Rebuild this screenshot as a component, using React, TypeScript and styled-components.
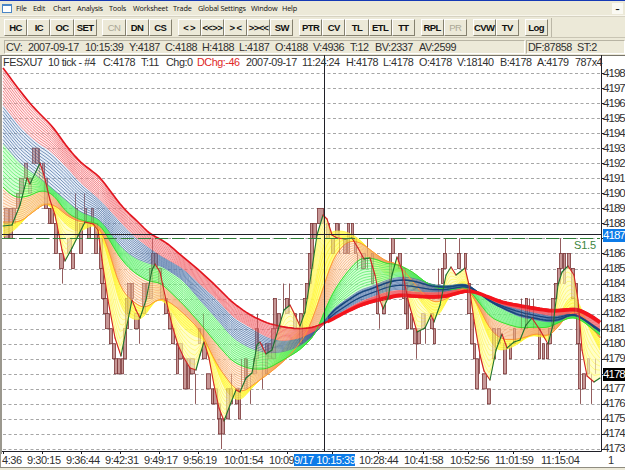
import React from 'react';
import styled, { createGlobalStyle } from 'styled-components';

type Point = [number, number];

const menuItems: [string, number][] = [
  ['File', 17],
  ['Edit', 20],
  ['Chart', 24],
  ['Analysis', 32],
  ['Tools', 24],
  ['Worksheet', 40],
  ['Trade', 25],
  ['Global Settings', 53],
  ['Window', 31],
  ['Help', 20],
];

const buttonGroups = [
  ['HC', 'IC', 'OC', 'SET'],
  ['CN', 'DN', 'CS'],
  ['< >', '<<>>', '> <', '>><<', 'SW'],
  ['PTR', 'CV', 'TL', 'ETL', 'TT'],
  ['RPL', 'PR'],
  ['CVW', 'TV'],
  ['Log'],
];

const disabledButtons = ['CN', 'PR'];

const cursorValues: [string, number][] = [
  ['CV:', 22],
  ['2007-09-17', 57],
  ['10:15:39', 44],
  ['Y:4187', 36],
  ['C:4188', 37],
  ['H:4188', 37],
  ['L:4187', 36],
  ['O:4188', 38],
  ['V:4936', 37],
  ['T:12', 25],
  ['BV:2337', 44],
  ['AV:2599', 45],
];

const quoteValues: [string, number][] = [
  ['FESXU7', 45],
  ['10 tick - #4', 55],
  ['C:4178', 38],
  ['T:11', 25],
  ['Chg:0', 31],
  ['DChg:-46', 49],
  ['2007-09-17', 56],
  ['11:24:24', 44],
  ['H:4178', 37],
  ['L:4178', 36],
  ['O:4178', 38],
  ['V:18140', 43],
  ['B:4178', 37],
  ['A:4179', 38],
  ['787x4', 26],
];

const timeLabels: [string, number][] = [
  ['4:36', 25],
  ['9:30:15', 39],
  ['9:36:44', 39],
  ['9:42:31', 39],
  ['9:49:17', 39],
  ['9:56:19', 41],
  ['10:01:54', 45],
  ['10:09', 90],
  ['10:28:44', 45],
  ['10:41:58', 46],
  ['10:52:56', 45],
  ['11:01:59', 46],
  ['11:15:04', 67],
  ['1', 10],
];

const timeTicks = [3, 42, 81, 120, 159, 198, 241, 287, 332, 378, 423, 468, 513, 559];

const prices = Array.from({ length: 26 }, (_, i) => 4198 - i);
const priceY = (price: number) => 73 + (98 - price) * 15.04;

// Curves run from the fastest average to the slowest one.
const fast: Point[] = [
  [3, 226], [12, 225], [20, 205], [27, 178], [30, 184], [40, 163], [44, 175], [50, 200], [55, 215],
  [62, 250], [65, 261], [72, 248], [78, 236], [85, 222], [93, 224], [98, 230], [102, 260], [108, 300],
  [115, 338], [121, 356], [127, 325], [132, 300], [136, 310], [140, 318], [146, 300], [152, 270],
  [155, 264], [160, 272], [166, 300], [172, 325], [178, 345], [184, 358], [190, 368], [196, 370],
  [200, 355], [204, 342], [209, 358], [214, 385], [219, 408], [224, 421], [230, 405], [236, 390],
  [240, 392], [246, 378], [252, 373], [257, 345], [260, 342], [266, 354], [272, 350], [278, 330],
  [284, 310], [290, 305], [295, 315], [300, 326], [305, 312], [311, 275], [317, 235], [323, 215],
  [327, 219], [332, 235], [337, 238], [345, 239], [352, 238], [358, 248], [364, 259], [370, 258],
  [375, 275], [380, 300], [383, 309], [388, 298], [392, 275], [397, 257], [402, 270], [408, 300],
  [413, 318], [417, 332], [425, 328], [431, 315], [434, 322], [440, 305], [446, 275], [451, 267],
  [456, 275], [460, 272], [465, 268], [469, 285], [474, 320], [480, 355], [484, 371], [490, 380],
  [496, 350], [502, 334], [507, 348], [514, 342], [520, 340], [526, 325], [532, 318], [540, 330],
  [548, 344], [553, 325], [558, 285], [562, 272], [568, 266], [574, 275], [578, 300], [582, 350],
  [587, 376], [594, 382], [600, 378],
];

const yellowMid: Point[] = [
  [3, 237], [15, 230], [33, 210], [45, 201], [55, 212], [66, 225], [78, 233], [90, 226], [98, 225],
  [108, 258], [121, 310], [130, 318], [140, 321], [148, 312], [156, 298], [166, 302], [180, 325],
  [195, 337], [204, 338], [214, 360], [224, 390], [233, 398], [240, 402], [250, 390], [262, 378],
  [272, 365], [283, 350], [293, 335], [302, 330], [312, 300], [322, 245], [330, 231], [345, 231],
  [357, 237], [370, 250], [383, 275], [392, 275], [402, 268], [413, 290], [425, 308], [437, 320],
  [447, 300], [457, 285], [465, 276], [475, 300], [485, 330], [495, 350], [505, 350], [515, 346],
  [530, 335], [548, 338], [557, 322], [568, 296], [577, 296], [587, 325], [600, 350],
];

const yellowOrange: Point[] = [
  [3, 222], [20, 222], [33, 212], [45, 203], [55, 205], [67, 216], [80, 222], [95, 222], [105, 238],
  [120, 288], [133, 302], [145, 309], [152, 303], [160, 298], [170, 302], [183, 313], [200, 330],
  [217, 365], [233, 387], [242, 393], [250, 387], [267, 375], [283, 362], [297, 347], [308, 331],
  [322, 292], [333, 258], [347, 241], [360, 242], [373, 252], [387, 262], [397, 263], [410, 278],
  [420, 291], [433, 303], [447, 299], [457, 292], [466, 286], [478, 305], [490, 330], [503, 340],
  [520, 339], [537, 333], [547, 337], [556, 330], [567, 315], [578, 310], [588, 322], [600, 338],
];

const orangeGreen: Point[] = [
  [3, 187], [15, 198], [30, 196], [40, 190], [52, 193], [67, 213], [80, 220], [100, 224], [120, 258],
  [133, 272], [150, 282], [160, 282], [183, 304], [200, 323], [217, 344], [233, 362], [250, 369],
  [267, 369], [283, 360], [300, 350], [315, 335], [325, 310], [333, 292], [347, 272], [360, 258],
  [373, 258], [387, 264], [397, 264], [413, 272], [425, 282], [433, 287], [447, 290], [457, 289],
  [466, 286], [478, 301], [490, 317], [503, 323], [520, 328], [537, 327], [547, 328], [560, 322],
  [570, 317], [580, 319], [600, 335],
];

const greenBlue: Point[] = [
  [3, 143], [20, 163], [40, 178], [60, 195], [80, 212], [100, 219], [120, 246], [133, 257],
  [150, 264], [160, 265], [183, 280], [200, 300], [217, 319], [233, 338], [250, 348], [267, 353],
  [283, 352], [300, 346], [315, 334], [333, 309], [347, 299], [360, 290], [373, 286], [387, 280],
  [400, 277], [413, 278], [433, 285], [447, 286], [460, 284], [468, 284], [480, 294], [490, 302],
  [503, 309], [520, 317], [537, 320], [547, 322], [560, 321], [572, 314], [580, 317], [600, 332],
];

const blueRed: Point[] = [
  [3, 104], [20, 126], [37, 142], [50, 150], [67, 167], [80, 182], [100, 199], [120, 221],
  [133, 235], [150, 248], [160, 255], [183, 268], [200, 284], [217, 299], [233, 317], [250, 327],
  [267, 337], [283, 341], [300, 338], [315, 331], [333, 318], [347, 309], [360, 302], [373, 297],
  [387, 292], [400, 290], [413, 292], [433, 293], [447, 292], [460, 289], [468, 288], [480, 293],
  [490, 300], [503, 305], [520, 309], [537, 313], [553, 316], [572, 313], [582, 317], [600, 329],
];

const slow: Point[] = [
  [3, 68], [20, 91], [33, 107], [53, 127], [67, 147], [80, 162], [100, 177], [113, 195], [125, 210],
  [135, 219], [150, 234], [160, 239], [167, 243], [183, 257], [200, 271], [217, 287], [233, 303],
  [250, 315], [267, 323], [283, 327], [300, 329], [315, 327], [333, 319], [347, 312], [360, 306],
  [373, 302], [387, 299], [400, 296], [413, 297], [433, 298], [447, 297], [460, 293], [470, 291],
  [487, 296], [503, 302], [520, 305], [537, 308], [553, 310], [567, 309], [577, 308], [590, 314],
  [600, 321],
];

// x, width, high, low (last two digits of the price)
const candles: [number, number, number, number][] = [
  [4, 4, 89, 88], [4, 4, 88, 87], [9, 3, 89, 87], [12, 3, 89, 88], [16, 3, 90, 89], [19, 4, 91, 90],
  [24, 3, 92, 91], [28, 3, 91, 90], [32, 3, 93, 92], [35, 3, 93, 92], [39, 1, 93, 91], [42, 2, 92, 91],
  [44, 3, 91, 89], [48, 3, 89, 88], [50, 3, 89, 88], [54, 3, 88, 86], [59, 4, 86, 85], [62, 1, 85, 84],
  [67, 4, 87, 86], [71, 3, 86, 85], [75, 1, 90, 89], [75, 2, 89, 87], [79, 3, 88, 86], [84, 1, 90, 89],
  [84, 2, 89, 88], [87, 3, 88, 87], [91, 2, 89, 88], [94, 3, 88, 86], [99, 3, 87, 85], [100, 3, 85, 84],
  [101, 4, 84, 83], [103, 4, 83, 82], [105, 4, 82, 81], [109, 3, 81, 80], [112, 3, 80, 79],
  [114, 3, 79, 78], [117, 3, 79, 78], [121, 2, 79, 78], [123, 3, 81, 79], [125, 3, 83, 81],
  [127, 3, 84, 82], [131, 2, 84, 83], [134, 4, 82, 81], [139, 1, 82, 80], [142, 3, 84, 82],
  [146, 3, 84, 83], [149, 3, 85, 83], [152, 1, 87, 85], [151, 3, 86, 85], [154, 3, 86, 85],
  [158, 3, 85, 84], [160, 3, 84, 83], [164, 3, 83, 82], [168, 3, 82, 81], [171, 3, 81, 80],
  [176, 2, 80, 78], [178, 4, 80, 79], [183, 3, 79, 77], [187, 2, 79, 77], [190, 4, 79, 78],
  [195, 1, 78, 76], [198, 2, 81, 80], [203, 1, 82, 80], [202, 4, 80, 79], [206, 4, 78, 77],
  [211, 2, 77, 76], [213, 4, 77, 76], [217, 3, 76, 75], [218, 3, 75, 74], [221, 3, 75, 74],
  [221, 1, 74, 73], [226, 3, 77, 75], [229, 3, 77, 76], [231, 1, 78, 77], [235, 3, 77, 76],
  [238, 2, 77, 75], [241, 1, 79, 77], [244, 2, 79, 77], [247, 1, 79, 77], [250, 1, 78, 76],
  [253, 3, 79, 78], [255, 3, 81, 79], [257, 1, 82, 80], [262, 1, 80, 77], [265, 2, 80, 78],
  [268, 3, 80, 79], [271, 4, 81, 79], [273, 3, 83, 81], [277, 3, 82, 81], [283, 1, 84, 82],
  [285, 3, 83, 82], [289, 1, 84, 82], [293, 3, 82, 81], [299, 3, 82, 80], [303, 2, 83, 82],
  [305, 3, 84, 83], [308, 3, 86, 84], [310, 3, 88, 85], [312, 4, 88, 87], [317, 6, 89, 88],
  [326, 3, 88, 87], [331, 3, 87, 86], [335, 3, 88, 87], [339, 1, 88, 86], [343, 3, 87, 86],
  [347, 2, 88, 86], [351, 2, 88, 87], [354, 2, 87, 86], [357, 1, 86, 85], [361, 4, 86, 85],
  [367, 1, 87, 85], [371, 2, 86, 84], [376, 2, 84, 82], [379, 1, 82, 81], [382, 3, 83, 82],
  [386, 3, 84, 83], [389, 2, 86, 84], [391, 3, 87, 86], [398, 3, 86, 85], [402, 3, 85, 83],
  [404, 3, 84, 82], [406, 2, 83, 81], [410, 2, 82, 81], [413, 3, 81, 80], [416, 1, 80, 79],
  [417, 3, 81, 80], [421, 3, 82, 81], [425, 1, 82, 80], [430, 3, 82, 81], [433, 2, 81, 80],
  [438, 1, 85, 83], [441, 2, 85, 84], [443, 3, 86, 85], [445, 1, 87, 86], [457, 3, 86, 85],
  [459, 1, 87, 86], [464, 2, 86, 85], [467, 3, 84, 82], [470, 3, 82, 80], [473, 2, 80, 79],
  [475, 3, 79, 77], [479, 1, 80, 78], [482, 4, 78, 77], [487, 3, 77, 76], [492, 3, 81, 79],
  [497, 3, 81, 80], [503, 3, 80, 78], [509, 2, 80, 79], [513, 2, 81, 80], [521, 1, 83, 81],
  [525, 2, 83, 81], [529, 1, 83, 82], [533, 1, 83, 81], [538, 2, 81, 79], [542, 2, 80, 79],
  [546, 2, 80, 79], [548, 3, 81, 80], [551, 3, 83, 81], [554, 3, 84, 83], [557, 3, 85, 84],
  [559, 3, 86, 85], [560, 1, 87, 86], [563, 2, 86, 84], [567, 3, 86, 85], [571, 3, 85, 83],
  [574, 3, 84, 82], [576, 3, 82, 80], [578, 2, 80, 77], [580, 1, 77, 76], [582, 3, 78, 77],
  [587, 2, 79, 78], [591, 1, 78, 76], [595, 1, 79, 78],
];

const valueAt = (curve: Point[], x: number) => {
  const next = curve.findIndex((point) => point[0] >= x);
  if (next <= 0) return next === 0 ? curve[0][1] : curve[curve.length - 1][1];
  const [x0, y0] = curve[next - 1];
  const [x1, y1] = curve[next];
  return y0 + ((y1 - y0) * (x - x0)) / (x1 - x0);
};

const smoothAt = (curve: Point[], x: number) => {
  const reach = curve === fast ? 1 : Math.min(5, x - 3, 600 - x);
  return (
    (valueAt(curve, x - reach) +
      valueAt(curve, x - reach / 2) +
      valueAt(curve, x) +
      valueAt(curve, x + reach / 2) +
      valueAt(curve, x + reach)) /
    5
  );
};

const blend = (from: Point[], to: Point[], t: number) => {
  const points: string[] = [];
  for (let x = 3; x <= 600; x += 3) {
    const y = smoothAt(from, x) * (1 - t) + smoothAt(to, x) * t;
    points.push(`${x},${y.toFixed(1)}`);
  }
  return points.join(' ');
};

const bands = [
  { from: fast, to: yellowMid, color: '#fff65c', tint: '#fffebe', opacity: 0.85, lines: 7 },
  { from: yellowMid, to: yellowOrange, color: '#fff22c', tint: '#fffc6a', opacity: 0.8, lines: 5 },
  { from: yellowOrange, to: orangeGreen, color: '#f2a062', tint: '#ffe2c4', opacity: 0.5, lines: 11 },
  { from: orangeGreen, to: greenBlue, color: '#44e858', tint: '#a8ffa8', opacity: 0.5, lines: 11 },
  { from: greenBlue, to: blueRed, color: '#365f98', tint: '#b7cdec', opacity: 0.3, lines: 11 },
  { from: blueRed, to: slow, color: '#ec5058', tint: '#ffc8c8', opacity: 0.3, lines: 11 },
];

const areaBetween = (from: Point[], to: Point[]) =>
  `${blend(from, from, 0)} ${blend(to, to, 0).split(' ').reverse().join(' ')}`;

const Ribbon = () => (
  <g fill="none">
    {bands.map(({ from, to, color, tint, opacity, lines }) => (
      <g key={color}>
        <polygon points={areaBetween(from, to)} fill={tint} fillOpacity={opacity} />
        {Array.from({ length: lines }, (_, i) => (
          <polyline key={i} points={blend(from, to, i / lines)} stroke={color} strokeWidth={0.65} />
        ))}
      </g>
    ))}
    <polyline points={blend(yellowOrange, yellowOrange, 0)} stroke="#ff9a30" strokeWidth={1} />
    <polyline points={blend(orangeGreen, orangeGreen, 0)} stroke="#3fdc2c" strokeWidth={1} />
    <polyline points={blend(slow, slow, 0)} stroke="#e2141e" strokeWidth={1.7} />
    <g clipPath="url(#settled)">
      <polyline points={blend(greenBlue, blueRed, 0.2)} stroke="#17457c" strokeWidth={1.6} />
      <polyline points={blend(greenBlue, blueRed, 0.6)} stroke="#17457c" strokeWidth={1.2} />
      <polyline points={blend(blueRed, slow, 0.8)} stroke="#f4141c" strokeWidth={3.6} />
    </g>
  </g>
);

const Candles = () => (
  <g fill="#bd8583" fillOpacity={0.8} stroke="#7a3436" strokeWidth={0.75}>
    {candles.map(([x, width, high, low]) =>
      width === 1 ? (
        <path key={`${x}-${high}`} d={`M${x + 0.5} ${priceY(high)}V${priceY(low)}`} />
      ) : (
        <rect
          key={`${x}-${high}`}
          x={x + 0.5}
          y={priceY(high)}
          width={width}
          height={(high - low) * 15.04}
        />
      ),
    )}
  </g>
);

const FastLine = () => (
  <g strokeWidth={1.1} strokeLinecap="round">
    {fast.slice(1).map(([x, y], i) => (
      <line
        key={x}
        x1={fast[i][0]}
        y1={fast[i][1]}
        x2={x}
        y2={y}
        stroke={y > fast[i][1] ? '#d02028' : '#1c7030'}
      />
    ))}
  </g>
);

const Chart = () => (
  <Plot viewBox="0 55 604 400">
    <clipPath id="settled">
      <rect x={328} y={55} width={273} height={396} />
    </clipPath>
    <g stroke="#a6a6a6" strokeDasharray="3 2.5">
      {prices.map((price) => {
        const y = Math.round(priceY(price - 4100)) + 0.5;
        return <line key={price} x1={3} x2={601} y1={y} y2={y} />;
      })}
    </g>
    <Candles />
    <Ribbon />
    <g opacity={0.25}>
      <Candles />
    </g>
    <FastLine />
    <line x1={2} x2={600} y1={238.5} y2={238.5} stroke="#2f8038" strokeDasharray="13 4" />
    <text x={574} y={249} fill="#3c8540" fontSize={11} textLength={22}>
      S1.5
    </text>
    <g stroke="#202028">
      <path d="M2 234.5H601M324.5 55V451M601.5 55V451.5M2 451.5H601.5" />
      {prices.map((price) => {
        const y = Math.round(priceY(price - 4100)) + 0.5;
        return <line key={price} x1={601} x2={604} y1={y} y2={y} />;
      })}
      {timeTicks.map((x) => (
        <line key={x} x1={x + 0.5} x2={x + 0.5} y1={451} y2={454} />
      ))}
    </g>
  </Plot>
);

const App = () => (
  <>
    <GlobalStyle />
    <Window>
      <MenuBar>
        <WindowIcon />
        {menuItems.map(([label, width]) => (
          <MenuItem key={label} $width={width}>
            {label}
          </MenuItem>
        ))}
        <Minimise>–</Minimise>
      </MenuBar>
      <Toolbar>
        {buttonGroups.map((group) => (
          <ButtonGroup key={group[0]}>
            {group.map((label) => (
              <ToolButton key={label} disabled={disabledButtons.includes(label)}>
                {label}
              </ToolButton>
            ))}
          </ButtonGroup>
        ))}
        <ToolbarEnd />
      </Toolbar>
      <InfoBar>
        <InfoPanel $width={521}>
          {cursorValues.map(([label, width]) => (
            <Value key={label} $width={width}>
              {label}
            </Value>
          ))}
        </InfoPanel>
        <InfoPanel $width={99}>
          <Value $width={49}>DF:87858</Value>
          <Value $width={30}>ST:2</Value>
        </InfoPanel>
      </InfoBar>
      <ChartArea>
        <Chart />
        <QuoteRow>
          {quoteValues.map(([label, width]) => (
            <Value key={label} $width={width} $alert={label.startsWith('DChg')}>
              {label}
            </Value>
          ))}
        </QuoteRow>
        <PriceAxis>
          {prices.map((price) => (
            <PriceLabel key={price}>{price}</PriceLabel>
          ))}
          <PriceMarker $top={173} $color="#0c7be8">
            4187
          </PriceMarker>
          <PriceMarker $top={312} $color="#000">
            4178
          </PriceMarker>
        </PriceAxis>
      </ChartArea>
      <TimeAxis>
        {timeLabels.map(([label, width]) => (
          <TimeLabel key={label} $width={width}>
            {label}
          </TimeLabel>
        ))}
        <TimeMarker>9/17 10:15:39</TimeMarker>
      </TimeAxis>
      <StatusStrip />
    </Window>
  </>
);

export default App;

const GlobalStyle = createGlobalStyle`
  * {
    box-sizing: border-box;
  }

  body {
    margin: 0;
    overflow: hidden;
    font-family: 'Liberation Sans', Arial, sans-serif;
  }
`;

const Window = styled.div`
  display: flex;
  flex-direction: column;
  width: 625px;
  height: 470px;
  overflow: hidden;
  background: #ece9d8;
  border-top: 1px solid #1539b5;
  white-space: nowrap;
`;

const MenuBar = styled.nav`
  display: flex;
  flex: none;
  align-items: center;
  height: 15px;
  padding: 0 2px;
  border-bottom: 1px solid #f8f6ec;
  color: #101010;
  font-family: 'Open Sans', sans-serif;
  font-size: 7.3px;
  font-weight: 500;
  letter-spacing: -0.2px;
`;

const WindowIcon = styled.span`
  width: 10px;
  height: 9px;
  margin-right: 4px;
  border: 1px solid #4a86c6;
  border-top-width: 2px;
  background: #fff;
`;

const MenuItem = styled.span<{ $width: number }>`
  flex: 0 0 ${({ $width }) => $width}px;
`;

const Minimise = styled.span`
  width: 11px;
  height: 11px;
  margin-left: auto;
  background: #faf9f3;
  font-size: 8px;
  font-weight: bold;
  line-height: 12px;
  text-align: center;
`;

const Toolbar = styled.div`
  display: flex;
  flex: none;
  align-items: center;
  gap: 5.6px;
  height: 22px;
  padding: 1px 0 1px 4px;
  border-top: 1px solid #d6d2c2;
  border-bottom: 1px solid #c9c5b4;
`;

const ButtonGroup = styled.div`
  display: flex;
`;

const ToolButton = styled.button`
  width: 23.2px;
  height: 17px;
  padding: 0;
  border: 1px solid;
  border-color: #fff #85816f #85816f #fff;
  background: #ece9d8;
  color: #111;
  font: bold 9.5px 'Liberation Sans', Arial, sans-serif;
  letter-spacing: -0.6px;
  line-height: 16px;
  text-align: center;

  &:disabled {
    color: #aaa796;
    font-weight: normal;
  }
`;

const ToolbarEnd = styled.span`
  height: 19px;
  margin-left: -2px;
  border-left: 1px solid #bbb7a7;
`;

const InfoBar = styled.div`
  display: flex;
  flex: none;
  gap: 1px;
  height: 17px;
  padding: 2px 0 1px 4px;
`;

const InfoPanel = styled.div<{ $width: number }>`
  display: flex;
  align-items: center;
  width: ${({ $width }) => $width}px;
  padding-left: 1px;
  border: 1px solid;
  border-color: #b7b3a3 #fff #fff #b7b3a3;
`;

const Value = styled.span<{ $width: number; $alert?: boolean }>`
  flex: 0 0 ${({ $width }) => $width}px;
  color: ${({ $alert }) => ($alert ? '#e02828' : '#303030')};
  font-size: 10.8px;
  letter-spacing: -0.45px;
`;

const ChartArea = styled.main`
  position: relative;
  display: flex;
  flex: none;
  height: 399px;
  background: #fff;
  border-top: 1px solid #77746a;
  border-left: 2px solid #9b988e;
`;

const Plot = styled.svg`
  flex: none;
  width: 604px;
  height: 400px;
  margin: -1px 0 0 -2px;
  font-family: 'Liberation Sans', Arial, sans-serif;
`;

const QuoteRow = styled.div`
  position: absolute;
  top: 0;
  left: 1px;
  display: flex;
  height: 12px;
  line-height: 12px;
`;

const PriceAxis = styled.div`
  position: relative;
  width: 22px;
  margin-left: -1px;
  padding-top: 9.5px;
  color: #303030;
  font-size: 11.5px;
  letter-spacing: -0.95px;
`;

const PriceLabel = styled.div`
  height: 15.04px;
  line-height: 15.04px;
`;

const PriceMarker = styled.div<{ $top: number; $color: string }>`
  position: absolute;
  top: ${({ $top }) => $top}px;
  left: 0;
  width: 23px;
  height: 12.5px;
  background: ${({ $color }) => $color};
  color: #fff;
  line-height: 13px;
`;

const TimeAxis = styled.div`
  position: relative;
  display: flex;
  flex: none;
  height: 13px;
  padding-left: 1px;
  background: #fff;
  border-left: 1px solid #9b988e;
  color: #303030;
  font-size: 11px;
  letter-spacing: -0.45px;
  line-height: 13px;
`;

const TimeLabel = styled.span<{ $width: number }>`
  flex: 0 0 ${({ $width }) => $width}px;
`;

const TimeMarker = styled.span`
  position: absolute;
  top: 0;
  left: 293px;
  width: 61px;
  height: 12px;
  background: #0c7be8;
  color: #fff;
`;

const StatusStrip = styled.footer`
  flex: 1;
  border-top: 1px solid #8f8c80;
`;
